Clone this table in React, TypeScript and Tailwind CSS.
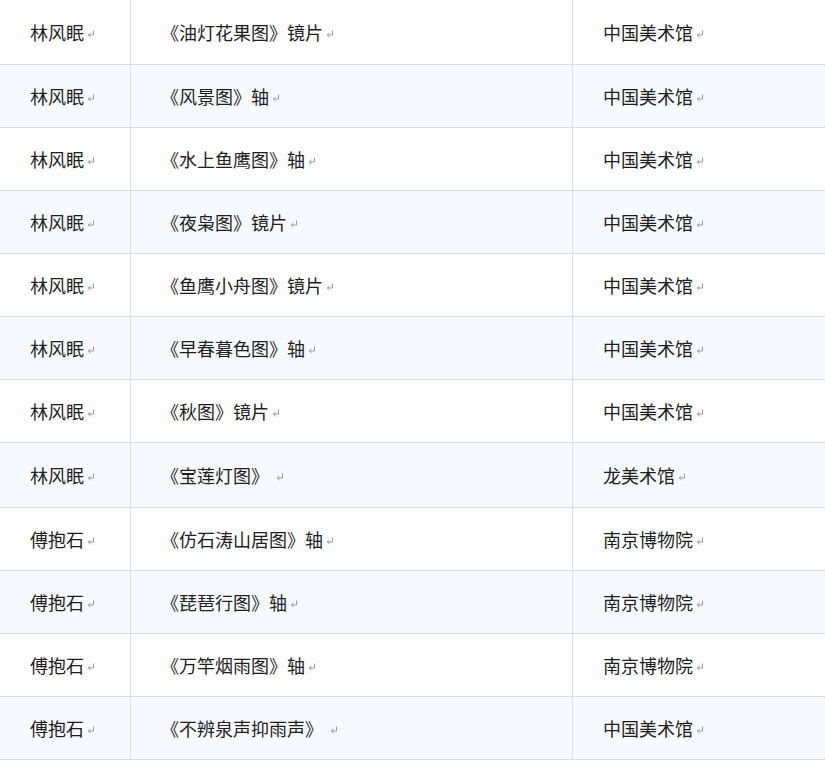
import React from "react";

const rows: [string, string, string][] = [
  ["林风眠", "《油灯花果图》镜片", "中国美术馆"],
  ["林风眠", "《风景图》轴", "中国美术馆"],
  ["林风眠", "《水上鱼鹰图》轴", "中国美术馆"],
  ["林风眠", "《夜枭图》镜片", "中国美术馆"],
  ["林风眠", "《鱼鹰小舟图》镜片", "中国美术馆"],
  ["林风眠", "《早春暮色图》轴", "中国美术馆"],
  ["林风眠", "《秋图》镜片", "中国美术馆"],
  ["林风眠", "《宝莲灯图》 ", "龙美术馆"],
  ["傅抱石", "《仿石涛山居图》轴", "南京博物院"],
  ["傅抱石", "《琵琶行图》轴", "南京博物院"],
  ["傅抱石", "《万竿烟雨图》轴", "南京博物院"],
  ["傅抱石", "《不辨泉声抑雨声》 ", "中国美术馆"],
];

function Ret() {
  return (
    <svg width="8" height="8" viewBox="0 0 8 8" className="ml-[3px] mt-[4px] shrink-0">
      <path d="M6.5 0.5 V5 H1.5" fill="none" stroke="#9a9a9a" strokeWidth="1" />
      <path d="M3.5 3 L1.2 5 L3.5 7" fill="none" stroke="#9a9a9a" strokeWidth="1" />
    </svg>
  );
}

function Cell({ text, w, last }: { text: string; w: string; last?: boolean }) {
  return (
    <div className={`${w} h-full flex items-center pl-[30px] pt-[0px] ${last ? "" : "border-r border-[#dcdfe4]"}`}>
      <span className="whitespace-pre">{text}</span>
      <Ret />
    </div>
  );
}

export default function App() {
  return (
    <div
      className="w-[825px] h-[761px] bg-white overflow-hidden text-[18px] leading-[24px] text-[#1e1e1e]"
      style={{ fontFamily: '"Noto Sans CJK SC", "Noto Sans", sans-serif' }}
    >
      {rows.map((r, i) => {
        const h = i === 0 ? "h-[65px]" : i === 7 ? "h-[65px]" : "h-[63px]";
        const bg = i % 2 === 0 ? "bg-[#fdfdfd]" : "bg-[#f6f9fe]";
        return (
          <div key={i} className={`flex ${h} ${bg} border-b border-[#d8dce2]`}>
            <Cell text={r[0]} w="w-[131px]" />
            <Cell text={r[1]} w="w-[442px]" />
            <Cell text={r[2]} w="flex-1" last />
          </div>
        );
      })}
    </div>
  );
}
